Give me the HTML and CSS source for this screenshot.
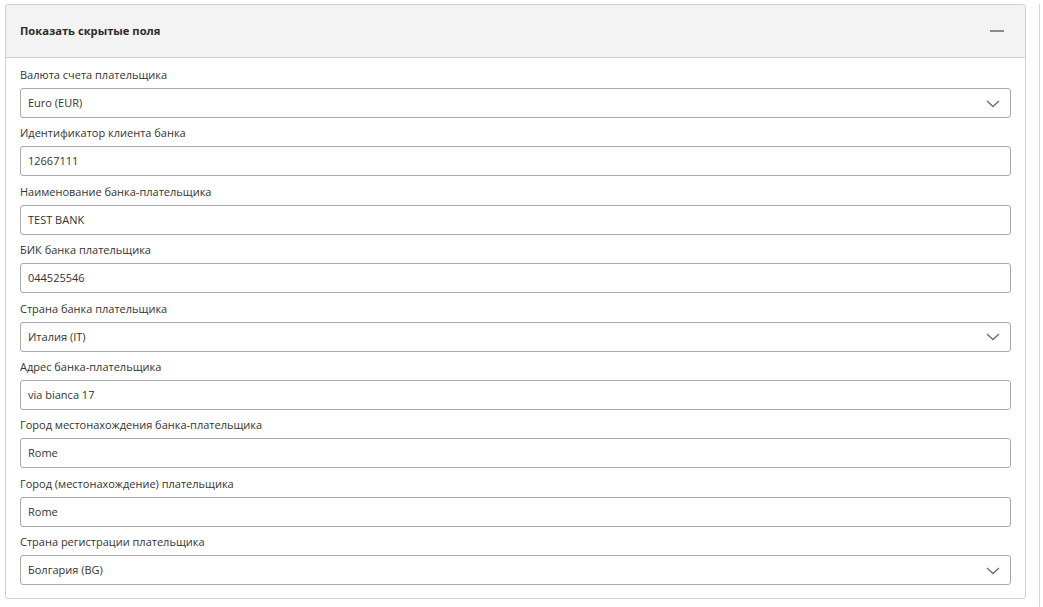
FILE: index.html
```html
<!DOCTYPE html>
<html lang="ru">
<head>
<meta charset="utf-8">
<title>Показать скрытые поля</title>
<link rel="stylesheet" href="styles.css">
</head>
<body>
<div class="page">
  <section class="card">
    <header class="card-header">
      <h2 class="card-title">Показать скрытые поля</h2>
      <span class="collapse-icon" aria-hidden="true"></span>
    </header>
    <div class="card-body">
      <div class="field">
        <label class="field-label">Валюта счета плательщика</label>
        <div class="control select"><span class="value">Euro (EUR)</span>
          <svg class="chevron" width="14" height="8" viewBox="0 0 14 8"><path d="M1 1 L7 6.5 L13 1" fill="none" stroke="#6b6b6b" stroke-width="1.3"/></svg>
        </div>
      </div>
      <div class="field">
        <label class="field-label">Идентификатор клиента банка</label>
        <div class="control"><span class="value">12667111</span></div>
      </div>
      <div class="field">
        <label class="field-label">Наименование банка-плательщика</label>
        <div class="control"><span class="value">TEST BANK</span></div>
      </div>
      <div class="field">
        <label class="field-label">БИК банка плательщика</label>
        <div class="control"><span class="value">044525546</span></div>
      </div>
      <div class="field">
        <label class="field-label">Страна банка плательщика</label>
        <div class="control select"><span class="value">Италия (IT)</span>
          <svg class="chevron" width="14" height="8" viewBox="0 0 14 8"><path d="M1 1 L7 6.5 L13 1" fill="none" stroke="#6b6b6b" stroke-width="1.3"/></svg>
        </div>
      </div>
      <div class="field">
        <label class="field-label">Адрес банка-плательщика</label>
        <div class="control"><span class="value">via bianca 17</span></div>
      </div>
      <div class="field">
        <label class="field-label">Город местонахождения банка-плательщика</label>
        <div class="control"><span class="value">Rome</span></div>
      </div>
      <div class="field">
        <label class="field-label">Город (местонахождение) плательщика</label>
        <div class="control"><span class="value">Rome</span></div>
      </div>
      <div class="field">
        <label class="field-label">Страна регистрации плательщика</label>
        <div class="control select"><span class="value">Болгария (BG)</span>
          <svg class="chevron" width="14" height="8" viewBox="0 0 14 8"><path d="M1 1 L7 6.5 L13 1" fill="none" stroke="#6b6b6b" stroke-width="1.3"/></svg>
        </div>
      </div>
    </div>
  </section>
  <div class="scroll-edge"></div>
</div>
</body>
</html>
```
FILE: styles.css
```css
html, body {
  margin: 0;
  padding: 0;
  background: #ffffff;
}
body {
  font-family: "Open Sans", "Noto Sans", sans-serif;
  font-size: 11px;
  color: #333333;
}
.page {
  display: flex;
  align-items: flex-start;
  padding: 4px 0 0 5px;
  gap: 13px;
}
.card {
  width: 1021px;
  border: 1px solid #d0d0d0;
  border-radius: 3px;
  box-sizing: border-box;
  background: #ffffff;
}
.card-header {
  height: 52px;
  background: #f3f3f3;
  border-bottom: 1px solid #d0d0d0;
  border-radius: 3px 3px 0 0;
  display: flex;
  align-items: center;
  justify-content: space-between;
  padding: 0 21px 0 14px;
}
.card-title {
  margin: 0;
  font-size: 11.2px;
  font-weight: 700;
  color: #2b2b2b;
  padding-bottom: 1px;
}
.collapse-icon {
  width: 14px;
  height: 1.5px;
  background: #8a8a8a;
  display: block;
}
.card-body {
  padding: 8px 14px 13px 14px;
  display: flex;
  flex-direction: column;
  gap: 6.4px;
}
.field {
  display: flex;
  flex-direction: column;
  gap: 4px;
}
.field-label {
  line-height: 18px;
  color: #333333;
}
.control {
  height: 30px;
  box-sizing: border-box;
  border: 1px solid #a9a9a9;
  border-radius: 3px;
  display: flex;
  align-items: center;
  justify-content: space-between;
  padding: 0 10px 0 7px;
  color: #333333;
}
.value {
  line-height: 18px;
}
.chevron {
  display: block;
  margin-top: 1px;
}
.scroll-edge {
  width: 1px;
  height: 603px;
  background: #d6d6d6;
}
```
